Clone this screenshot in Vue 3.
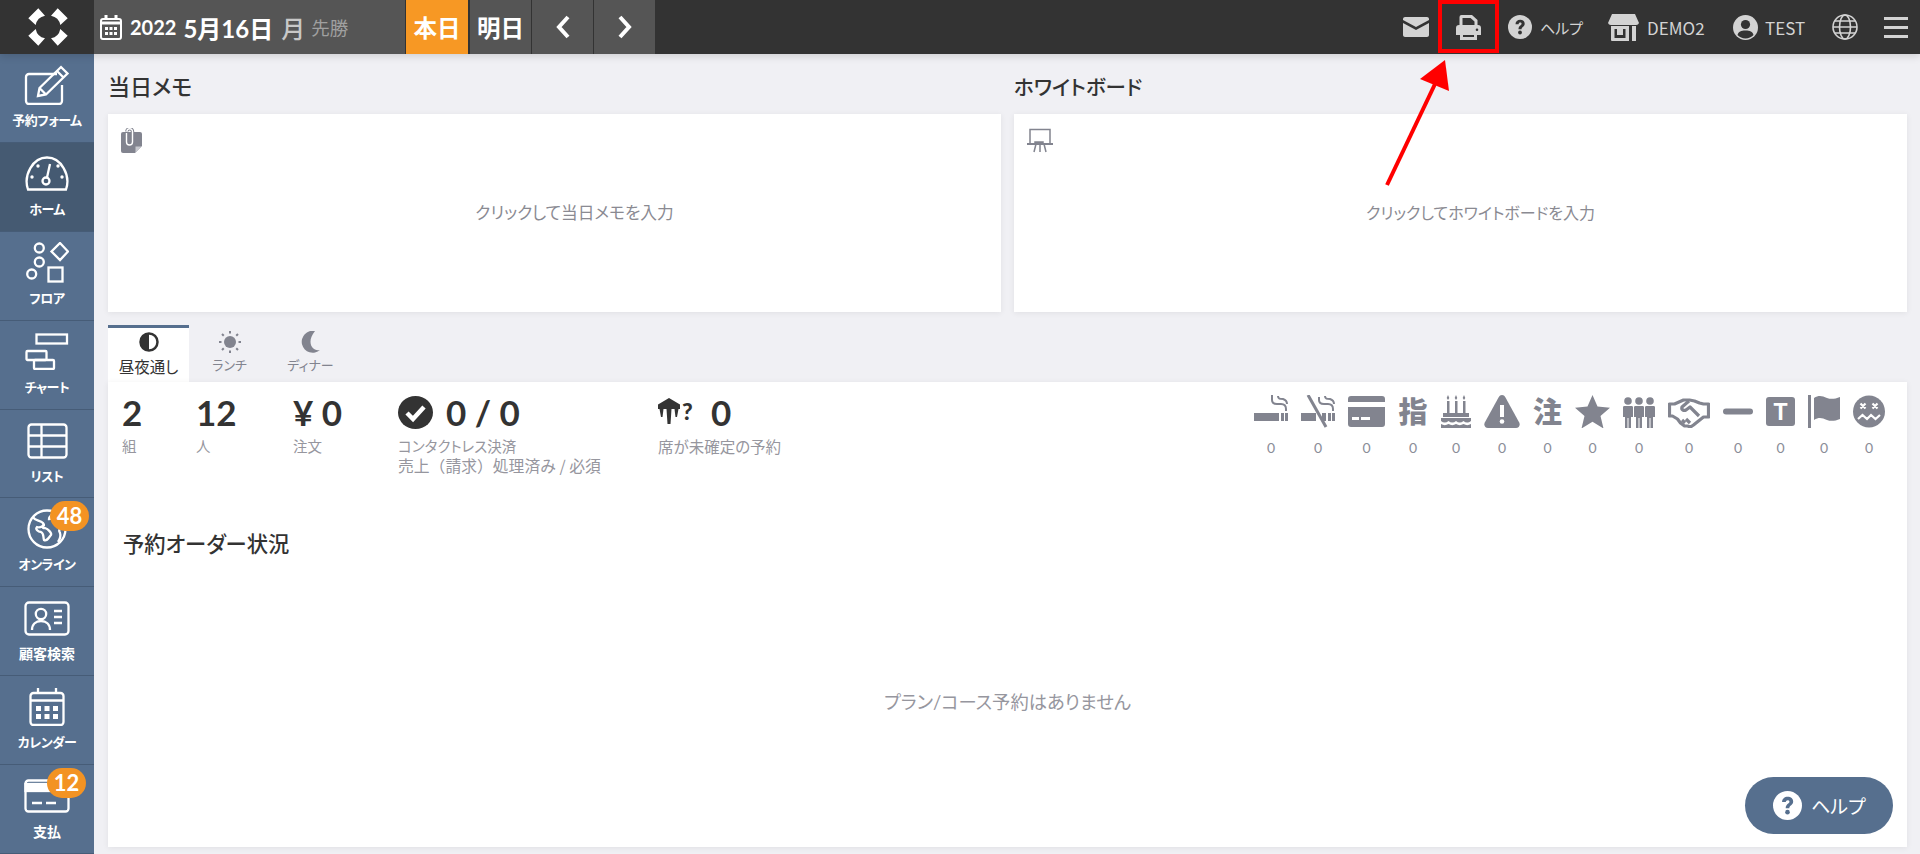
<script setup>
const q = `<circle cx="12" cy="12" r="12" fill="currentColor"/><path d="M7.500 9.200C7.500 6.500 9.600 4.800 12.200 4.800c2.600 0 4.500 1.600 4.500 3.900 0 3.100-3.200 3.300-3.200 5.500h-3c0-3.700 3.100-3.800 3.100-5.400 0-.7-.6-1.200-1.400-1.200-.9 0-1.500.6-1.600 1.600z" fill="var(--qc)"/><circle cx="12" cy="17.500" r="1.900" fill="var(--qc)"/>`

const navItems = [
  { label: '予約フォーム', kana: true, w: 46, h: 40, svg: `<path d="M33 9H5a3 3 0 0 0-3 3v24a3 3 0 0 0 3 3h30a3 3 0 0 0 3-3V20"/><path d="M14 31l1.500-8L37 2l6.500 6.500L22 29.500zM15.500 23l6.500 6.500M33 6l6.500 6.500"/>` },
  { label: 'ホーム', kana: true, active: true, w: 46, h: 35, svg: `<path d="M4 33.500C-1 19 9 1.500 23 1.500S47 19 42 33.500z"/><circle cx="22" cy="25" r="3.500"/><path d="M23 21.500L26 8"/><g fill="#fff" stroke="none"><circle cx="8" cy="21" r="1.700"/><circle cx="14" cy="10" r="1.700"/><circle cx="34" cy="10" r="1.700"/><circle cx="38" cy="21" r="1.700"/></g>` },
  { label: 'フロア', kana: true, w: 43, h: 41, svg: `<circle cx="13.300" cy="6" r="4.500"/><circle cx="13.300" cy="20" r="4.500"/><circle cx="5.700" cy="32" r="4.500"/><path d="M34 1l8 8.500-8 8.500-8.500-8.500z"/><rect x="22.500" y="25.500" width="14" height="14"/>` },
  { label: 'チャート', kana: true, w: 44, h: 37, svg: `<rect x="11.500" y="1.500" width="30.500" height="9"/><rect x="1.500" y="18" width="20" height="9" rx="1"/><rect x="9" y="27" width="20" height="9" rx="1"/>` },
  { label: 'リスト', kana: true, w: 41, h: 36, svg: `<rect x="1.500" y="1.500" width="38" height="33" rx="3"/><path d="M1.500 12.500h38M1.500 23.500h38M14.500 1.500v33"/>` },
  { label: 'オンライン', kana: true, badge: 48, w: 40, h: 40, svg: `<circle cx="20" cy="20" r="18.500"/><path d="M6 8c2 4 7 3 10 6 2 3-3 5-6 4-2 2 1 5 4 5 3 1 2 5 3 8 3 2 5-3 7-5 1-2-3-6-6-7-3 1-3-3 0-3M27 3c-2 3-5 4-5 7 3 0 5-2 8-1M36 18c-3 0-5 3-3 6 1 3 0 6-2 9"/>` },
  { label: '顧客検索', w: 46, h: 35, svg: `<rect x="1.500" y="1.500" width="43" height="32" rx="3.500"/><circle cx="17" cy="13" r="5.200"/><path d="M8 29c0-6 4-9 9-9s9 3 9 9M30 10h8M30 16h8M30 22h8"/>` },
  { label: 'カレンダー', kana: true, w: 36, h: 38, svg: `<rect x="1.500" y="5" width="33" height="32" rx="3"/><path d="M1.500 12.500h33M9 0v5M27 0v5"/><g fill="#fff" stroke="none"><rect x="7" y="18" width="5" height="5"/><rect x="15.500" y="18" width="5" height="5"/><rect x="24" y="18" width="5" height="5"/><rect x="7" y="26" width="5" height="5"/><rect x="15.500" y="26" width="5" height="5"/><rect x="24" y="26" width="5" height="5"/></g>` },
  { label: '支払', badge: 12, w: 46, h: 34, svg: `<rect x="1.500" y="1.500" width="43" height="31" rx="3"/><rect x="1.500" y="5" width="43" height="7" fill="#fff"/><path d="M8 24h10M22 24h10"/>` },
]

const statIcons = [
  { w: 34, svg: `<rect y="18" width="25" height="8"/><rect x="27" y="18" width="3" height="8"/><rect x="31" y="18" width="3" height="8"/><g fill="none" stroke="currentColor" stroke-width="2"><path d="M18 0v5c0 3 2 4 5 4h4c3 0 5 2 5 5v2"/><path d="M24 1c0 3 2 3 5 3 3 1 4 3 4 5"/></g>` },
  { w: 34, svg: `<rect y="18" width="15" height="8"/><rect x="27" y="18" width="3" height="8"/><rect x="31" y="18" width="3" height="8"/><rect x="21" y="18" width="4" height="8"/><g fill="none" stroke="currentColor" stroke-width="2"><path d="M18 2v3c0 3 2 4 5 4h4c3 0 5 2 5 5v2"/><path d="M24 1c0 3 2 3 5 3 3 1 4 3 4 5"/></g><path d="M7 0L25 32" stroke="currentColor" stroke-width="3"/>` },
  { w: 37, svg: `<path d="M3 1h31a3 3 0 0 1 3 3v3H0V4a3 3 0 0 1 3-3zM0 12h37v17a3 3 0 0 1-3 3H3a3 3 0 0 1-3-3z"/><rect x="4" y="22" width="7" height="3" fill="#fff"/><rect x="13" y="22" width="9" height="3" fill="#fff"/>` },
  { text: '指', w: 30 },
  { w: 30, svg: `<rect x="6" y="6" width="2.500" height="12"/><rect x="14" y="6" width="2.500" height="12"/><rect x="22" y="6" width="2.500" height="12"/><path d="M7 0l1.300 3-1.300 2-1.300-2zM15 0l1.300 3-1.300 2-1.300-2zM23 0l1.300 3-1.300 2-1.300-2z"/><rect x="2" y="18" width="26" height="4"/><path d="M0 23h30v3c-3 2-5 2-7.500 0-2.500 2-5 2-7.500 0-2.500 2-5 2-7.500 0-2.500 2-5 2-7.500 0z"/><path d="M0 29c2.500 1.500 5 1.500 7.500 0 2.500 1.500 5 1.500 7.500 0 2.500 1.500 5 1.500 7.500 0 2.500 1.500 5 1.500 7.500 0v4H0z"/>` },
  { w: 36, svg: `<path d="M18 0c1.500 0 2.500.8 3.200 2l14 25.500c1.300 2.500-.2 5.500-3.200 5.500H4c-3 0-4.500-3-3.200-5.500L14.800 2C15.500.8 16.500 0 18 0z"/><rect x="16" y="10" width="4" height="12" fill="#fff"/><circle cx="18" cy="26.500" r="2.300" fill="#fff"/>` },
  { text: '注', w: 29 },
  { w: 35, svg: `<path d="M17.500 0l5 11.500 12.500 1.200-9.500 8.300 3 12.500-11-6.700-11 6.700 3-12.500L0 12.700l12.500-1.200z"/>` },
  { w: 32, svg: `<circle cx="5" cy="6" r="3.800"/><path d="M1.500 11h7c1 0 1.500.5 1.500 1.500V22H8v11H5.500V23h-1v10H2V22H0v-9.500C0 11.500.5 11 1.500 11z"/><circle cx="16" cy="6" r="3.800"/><path d="M12.500 11h7c1 0 1.500.5 1.500 1.500V22h-2v11h-2.500V23h-1v10H13V22h-2v-9.500c0-1 .5-1.500 1.500-1.500z"/><circle cx="27" cy="6" r="3.800"/><path d="M23.500 11h7c1 0 1.500.5 1.500 1.500V22h-2v11h-2.500V23h-1v10H24V22h-2v-9.500c0-1 .5-1.500 1.500-1.500z"/>` },
  { w: 42, svg: `<g fill="none" stroke="currentColor" stroke-width="3.200" stroke-linejoin="round"><path d="M1.500 9h5l9-4h6l5 1 5 2 4 1h5v13h-5l-10 8-3 2-3-1-3 0-4-3-3-4-5-3H1.500z"/><path d="M21 6l-7 6c-1 3 2 4 4 3l4-3 9 9"/><path d="M14 25l3 3M18 24l4 4"/></g>` },
  { w: 30, svg: `<rect y="13.500" width="30" height="6" rx="3"/>` },
  { w: 29, svg: `<rect y="2" width="29" height="29" rx="3"/><text x="14.500" y="25" text-anchor="middle" font-family="Liberation Sans" font-weight="700" font-size="23" fill="#fff">T</text>` },
  { w: 32, svg: `<rect width="3" height="33"/><path d="M6 3c5-3 8-2 13 0 4 1.500 8 1 13-1v22c-5 2-9 2.500-13 1-5-2-8-3-13 0z"/>` },
  { w: 32, svg: `<circle cx="16" cy="16.500" r="16"/><g fill="none" stroke="#fff" stroke-width="2.200"><path d="M7.500 8.500l5 5M12.500 8.500l-5 5M19.500 8.500l5 5M24.500 8.500l-5 5"/><path d="M5 24l4.500-4 4.500 4 4-4 4.500 4 4.500-4"/></g>` },
]
</script>

<template>
  <div class="page">
    <header class="topbar">
      <div class="logo">
        <svg width="56" height="54" viewBox="0 0 56 54" fill="#fff">
          <path d="M8.300 18.300L18.300 8.300 25 15.700A11.700 11.700 0 0 0 15.700 25z" />
          <path d="M47.700 18.300L37.700 8.300 31 15.700A11.700 11.700 0 0 1 40.300 25z" />
          <path d="M8.300 35.700L18.300 45.700 25 38.300A11.700 11.700 0 0 1 15.700 29z" />
          <path d="M47.700 35.700L37.700 45.700 31 38.300A11.700 11.700 0 0 0 40.300 29z" />
        </svg>
      </div>
      <div class="date">
        <svg width="22" height="25" viewBox="0 0 22 25" fill="none" stroke="#fff" stroke-width="2">
          <rect x="1" y="4" width="20" height="20" rx="2" />
          <path d="M1 8h20" stroke-width="3" />
          <path d="M6 0v4M16 0v4" stroke-width="3" />
          <g fill="#fff" stroke="none">
            <rect x="5" y="12" width="3" height="3" /><rect x="9.500" y="12" width="3" height="3" /><rect x="14" y="12" width="3" height="3" />
            <rect x="5" y="17" width="3" height="3" /><rect x="9.500" y="17" width="3" height="3" /><rect x="14" y="17" width="3" height="3" />
          </g>
        </svg>
        <span class="year">2022</span>
        <span class="day">5月16日</span>
        <span class="dow">月</span>
        <span class="rokuyo">先勝</span>
      </div>
      <button class="day-btn today">本日</button>
      <button class="day-btn">明日</button>
      <button class="day-btn arrow">
        <svg width="16" height="24" viewBox="0 0 16 24" fill="none" stroke="#fff" stroke-width="4"><path d="M13 2L4 12l9 10" /></svg>
      </button>
      <button class="day-btn arrow">
        <svg width="16" height="24" viewBox="0 0 16 24" fill="none" stroke="#fff" stroke-width="4"><path d="M3 2l9 10-9 10" /></svg>
      </button>
      <div class="top-right">
        <svg class="mail" width="26" height="20" viewBox="0 0 26 20"><path d="M2 0h22c1 0 2 .8 2 2v1L13 10 0 3V2C0 .8 1 0 2 0zM0 6l13 7 13-7v12c0 1.200-1 2-2 2H2c-1 0-2-.8-2-2z" fill="#d3d3d3" /></svg>
        <svg class="printer" width="25" height="25" viewBox="0 0 25 25" fill="#d3d3d3"><path d="M3.500 11V2a2 2 0 0 1 2-2H16l5.500 5v6h-3V6.500L14.500 3H6.500v8z" /><path d="M3 10h19a3 3 0 0 1 3 3v7h-4v5H4v-5H0v-7a3 3 0 0 1 3-3zm4 10v2h11v-2zm14-6.500a1.300 1.300 0 1 0 0 2.600 1.300 1.300 0 0 0 0-2.600z" fill-rule="evenodd" /></svg>
        <svg class="q-icon" width="24" height="24" viewBox="0 0 24 24" v-html="q"></svg>
        <span class="t-help">ヘルプ</span>
        <svg class="shop" width="31" height="27" viewBox="0 0 31 27" fill="#d3d3d3"><path d="M4 0h23l4 9a3 3 0 0 1-3 2H3a3 3 0 0 1-3-2z" /><path d="M3 12h18v15H4a1 1 0 0 1-1-1zm3.500 3v9h11v-9h-2.500v6H9v-6z" fill-rule="evenodd" /><rect x="24" y="12" width="4" height="15" /></svg>
        <span class="t-demo">DEMO2</span>
        <svg class="user" width="25" height="25" viewBox="0 0 25 25"><circle cx="12.500" cy="12.500" r="12.500" fill="#d3d3d3" /><circle cx="12.500" cy="9.500" r="4.600" fill="#333" /><path d="M4.500 20c1-3.500 3.500-4.500 8-4.500s7 1 8 4.500a11 11 0 0 1-16 0z" fill="#333" /></svg>
        <span class="t-test">TEST</span>
        <svg class="globe" width="26" height="26" viewBox="0 0 26 26" fill="none" stroke="#d3d3d3" stroke-width="1.600"><circle cx="13" cy="13" r="12" /><ellipse cx="13" cy="13" rx="5.500" ry="12" /><path d="M1 13h24M3 7h20M3 19h20" /></svg>
        <div class="burger"><i></i><i></i><i></i></div>
      </div>
    </header>

    <div class="body">
      <nav class="sidebar">
        <a v-for="item in navItems" :key="item.label" class="nav-item" :class="{ active: item.active }">
          <span class="nav-icon">
            <svg :width="item.w" :height="item.h" :viewBox="`0 0 ${item.w} ${item.h}`" fill="none" stroke="#fff" stroke-width="2.300" v-html="item.svg"></svg>
            <span v-if="item.badge" class="badge">{{ item.badge }}</span>
          </span>
          <span class="nav-label" :class="{ kana: item.kana }">{{ item.label }}</span>
        </a>
      </nav>

      <main class="main">
        <div class="boards">
          <section class="memo">
            <h2>当日メモ</h2>
            <div class="board">
              <svg class="board-icon" width="21" height="25" viewBox="0 0 21 25"><path d="M2 4h17a2 2 0 0 1 2 2v12l-7 7H2a2 2 0 0 1-2-2V6a2 2 0 0 1 2-2z" fill="#82848f" /><path d="M14.500 24.500l6-6h-6z" fill="#c8c9cf" /><path d="M5.500 5v9a3 3 0 0 0 6 0V3.500a2.800 2.800 0 0 0-5.600 0" fill="none" stroke="#82848f" stroke-width="3.400" /><path d="M5.500 5v9a3 3 0 0 0 6 0V3.500a2.800 2.800 0 0 0-5.600 0" fill="none" stroke="#fff" stroke-width="1.400" /></svg>
              <p>クリックして当日メモを入力</p>
            </div>
          </section>
          <section class="white">
            <h2>ホワイトボード</h2>
            <div class="board">
              <svg class="board-icon" width="26" height="25" viewBox="0 0 26 25" fill="none" stroke="#82848f" stroke-width="1.500"><path d="M3 15V1.500h20V15" /><path d="M0 16h26" stroke-width="2" /><path d="M9 16l-2 8M13 16v8M17 16l2 8" /><rect x="8" y="14" width="8" height="2" fill="#82848f" /></svg>
              <p>クリックしてホワイトボードを入力</p>
            </div>
          </section>
        </div>

        <div class="tabs">
          <div class="tab on">
            <svg width="20" height="20" viewBox="0 0 20 20"><circle cx="10" cy="10" r="8.500" fill="#fff" stroke="#333" stroke-width="2.500" /><path d="M10 1.500a8.500 8.500 0 0 0 0 17z" fill="#333" /></svg>
            <span>昼夜通し</span>
          </div>
          <div class="tab">
            <svg width="22" height="22" viewBox="0 0 22 22" fill="#82848f"><circle cx="11" cy="11" r="6" /><g stroke="#82848f" stroke-width="2" stroke-dasharray="2.500 30"><path d="M11 0v4M11 22v-4M0 11h4M22 11h-4M3 3l3 3M19 3l-3 3M3 19l3-3M19 19l-3-3" /></g></svg>
            <span>ランチ</span>
          </div>
          <div class="tab">
            <svg width="20" height="22" viewBox="0 0 20 22"><path d="M14 0a11 11 0 1 0 5 19C11 21 5 11 14 0z" fill="#82848f" /></svg>
            <span>ディナー</span>
          </div>
        </div>

        <div class="panel">
          <div class="stats">
            <div class="stat s1"><b>2</b><small>組</small></div>
            <div class="stat s2"><b>12</b><small>人</small></div>
            <div class="stat s3"><b>¥ 0</b><small>注文</small></div>
            <div class="stat s4">
              <div class="stat-line">
                <svg width="35" height="33" viewBox="0 0 35 33"><ellipse cx="17.500" cy="16.500" rx="17.500" ry="16.500" fill="#333" /><path d="M9 17l6 6 11-12" fill="none" stroke="#fff" stroke-width="4.500" /></svg>
                <b>0 / 0</b>
              </div>
              <small>コンタクトレス決済<br /><span class="wide">売上（請求）処理済み / 必須</span></small>
            </div>
            <div class="stat s5">
              <div class="stat-line">
                <svg width="23" height="28" viewBox="0 0 23 28" fill="#333"><path d="M11 0l11 6.500V11H0V6.500z" /><path d="M1.500 11h4l-1 8H3zM8.500 11h5l-1 15h-3zM16.500 11h4l-1.500 8h-1.500z" /></svg>
                <span class="qm">?</span>
                <b>0</b>
              </div>
              <small>席が未確定の予約</small>
            </div>
            <div class="stat-icons">
              <div v-for="(ic, i) in statIcons" :key="i" class="si" :style="{ width: ic.w + 'px' }">
                <span v-if="ic.text" class="si-text">{{ ic.text }}</span>
                <svg v-else :width="ic.w" height="33" :viewBox="`0 0 ${ic.w} 33`" fill="#82848f" color="#82848f" v-html="ic.svg"></svg>
                <em>0</em>
              </div>
            </div>
          </div>
          <h3>予約オーダー状況</h3>
          <p class="empty">プラン/コース予約はありません</p>
        </div>
      </main>
    </div>

    <button class="help-fab">
      <svg class="q-fab" width="29" height="29" viewBox="0 0 24 24" v-html="q"></svg>
      <span>ヘルプ</span>
    </button>

    <div class="red-box"></div>
    <svg class="red-arrow" width="80" height="140" viewBox="0 0 80 140">
      <path d="M9 127L57 26" stroke="#f00" stroke-width="4" />
      <path d="M67 2L71 33 42 21z" fill="#f00" />
    </svg>
  </div>
</template>

<style>
html, body { margin: 0; overflow: hidden; }
</style>

<style scoped>
.page {
  position: relative;
  width: 1920px;
  height: 854px;
  overflow: hidden;
  background: #f0f0f4;
  font-family: Lato, "Noto Sans CJK JP", sans-serif;
  font-feature-settings: "palt";
  color: #333;
}
.topbar {
  height: 54px;
  display: flex;
  align-items: stretch;
  background: #333;
  box-shadow: 0 2px 8px rgba(0, 0, 0, .15);
  position: relative;
  z-index: 2;
}
.logo { width: 94px; display: flex; padding-left: 20px; box-sizing: border-box; }
.date {
  width: 311px;
  background: #555;
  display: flex;
  align-items: center;
  padding-left: 6px;
  box-sizing: border-box;
  color: #fff;
}
.year { margin-left: 8px; font-size: 20px; font-weight: 700; }
.day { margin-left: 7px; font-size: 24px; font-weight: 700; }
.dow { margin-left: 8px; font-size: 24px; font-weight: 500; color: #c8c8c8; }
.rokuyo { margin-left: 6px; font-size: 18.500px; color: #a0a0a0; }
.day-btn {
  width: 61px;
  margin-left: 1px;
  padding: 0;
  border: 0;
  background: #555;
  color: #fff;
  font: 700 23.500px Lato, "Noto Sans CJK JP", sans-serif;
  font-feature-settings: "palt";
  display: flex;
  align-items: center;
  justify-content: center;
}
.day-btn.today { background: #f79824; width: 62px; }
.day-btn.today + .day-btn { margin-left: 2px; }
.top-right { flex: 1; position: relative; display: flex; align-items: center; color: #d3d3d3; font-size: 17px; font-family: "Noto Sans CJK JP", sans-serif; }
.mail { margin-left: 748px; }
.printer { margin-left: 27px; }
.q-icon { margin-left: 27px; --qc: #333; color: #d3d3d3; }
.t-help { margin-left: 8px; width: 41px; white-space: nowrap; font-size: 15px; }
.shop { margin-left: 27px; }
.t-demo { margin-left: 8px; width: 59px; }
.user { margin-left: 27px; }
.t-test { margin-left: 7px; width: 40px; }
.globe { margin-left: 27px; }
.burger { margin-left: 26px; width: 24px; display: flex; flex-direction: column; gap: 6px; }
.burger i { display: block; height: 3px; background: #d3d3d3; }

.body { display: flex; height: 800px; }
.sidebar {
  width: 94px;
  flex: none;
  display: grid;
  grid-template-rows: repeat(9, 1fr);
  background: #566f8e;
}
.nav-item {
  display: flex;
  flex-direction: column;
  align-items: center;
  box-sizing: border-box;
  padding-top: 8px;
  border-bottom: 1px solid #465c77;
  color: #fff;
}
.nav-item.active { background: #455a72; }
.nav-icon { position: relative; height: 46px; display: flex; align-items: center; justify-content: center; }
.nav-label {
  margin-top: 2px;
  height: 20px;
  line-height: 20px;
  font-size: 14px;
  font-weight: 700;
  white-space: nowrap;
  font-family: "Noto Sans CJK JP", sans-serif;
}
.nav-label.kana { font-size: 13px; letter-spacing: -.5px; }
.badge {
  position: absolute;
  left: 23px;
  top: -5px;
  width: 39px;
  height: 30px;
  border-radius: 15px;
  background: #f39323;
  color: #fff;
  font-size: 22px;
  font-weight: 700;
  line-height: 30px;
  text-align: center;
}

.main { flex: 1; padding: 0 13px 0 14px; min-width: 0; }
.boards { display: grid; grid-template-columns: 893px 893px; gap: 13px; }
h2 {
  margin: 0;
  height: 60px;
  line-height: 66px;
  font-size: 20.500px;
  font-weight: 500;
  color: #333;
}
.memo h2 { font-size: 22px; }
.board {
  position: relative;
  height: 198px;
  background: #fff;
  box-shadow: 0 1px 6px rgba(0, 0, 0, .07);
}
.board-icon { position: absolute; left: 13px; top: 14px; }
.board p {
  margin: 0;
  padding-left: 40px;
  line-height: 198px;
  text-align: center;
  color: #8a8a92;
  font-size: 16px;
}
.memo .board p { font-size: 16.700px; }
.tabs { display: flex; margin-top: 13px; height: 57px; }
.tab {
  width: 81px;
  box-sizing: border-box;
  border-top: 3px solid transparent;
  display: flex;
  flex-direction: column;
  align-items: center;
  color: #82848f;
  font-size: 13px;
  padding-top: 3px;
  gap: 2px;
}
.tab svg { height: 22px; }
.tab.on { background: #fff; border-top-color: #566f8e; color: #333; font-size: 15.500px; }
.panel {
  position: relative;
  height: 465px;
  background: #fff;
  box-shadow: 0 1px 6px rgba(0, 0, 0, .07);
}
.stats { display: flex; padding: 12px 0 0 14px; align-items: flex-start; }
.stat b { display: block; font-size: 35px; line-height: 36px; font-weight: 700; color: #333; white-space: nowrap; }
.stat small { display: block; margin-top: 6px; font-size: 14.500px; line-height: 20px; color: #96969e; white-space: nowrap; font-family: "Noto Sans CJK JP", sans-serif; }
.s1 { width: 74px; }
.s2 { width: 97px; }
.s3 { width: 105px; }
.s4 { width: 260px; }
.s5 { width: 260px; }
.s5 small { font-size: 15.500px; }
.stat-line { display: flex; align-items: center; gap: 13px; height: 36px; }
.s5 .stat-line { gap: 0; }
.qm { margin: -3px 0 0 1px; width: 14px; font-size: 23px; font-weight: 900; line-height: 30px; color: #333; }
.s5 b { margin-left: 15px; }
.wide { font-feature-settings: normal; font-size: 15.800px; }
.stat-icons {
  position: absolute;
  left: 1146px;
  top: 13px;
  display: flex;
  gap: 13px;
}
.si { display: flex; flex-direction: column; align-items: center; }
.si-text { height: 33px; line-height: 31px; font-size: 29px; font-weight: 900; color: #82848f; font-family: "Noto Sans CJK JP", sans-serif; }
.si em { margin-top: 11px; font-style: normal; font-size: 14px; line-height: 18px; color: #8a8d98; }
h3 {
  margin: 52px 0 0 15px;
  font-size: 21.300px;
  line-height: 32px;
  font-weight: 500;
  color: #333;
}
.empty {
  margin: 0;
  position: absolute;
  left: 0;
  right: 0;
  top: 305px;
  line-height: 30px;
  text-align: center;
  font-size: 18.300px;
  color: #96969e;
}
.help-fab {
  position: absolute;
  left: 1745px;
  top: 777px;
  width: 148px;
  height: 57px;
  border: 0;
  border-radius: 29px;
  background: #566f8e;
  color: #fff;
  display: flex;
  align-items: center;
  padding: 0 0 0 28px;
  gap: 9px;
  font: 400 19px "Noto Sans CJK JP", sans-serif;
  font-feature-settings: "palt";
  z-index: 3;
}
.q-fab { --qc: #566f8e; color: #fff; }
.red-box {
  position: absolute;
  left: 1438px;
  top: 0;
  width: 61px;
  height: 53px;
  box-sizing: border-box;
  border: 4px solid #f00;
  z-index: 4;
}
.red-arrow { position: absolute; left: 1378px; top: 58px; z-index: 4; }
</style>
